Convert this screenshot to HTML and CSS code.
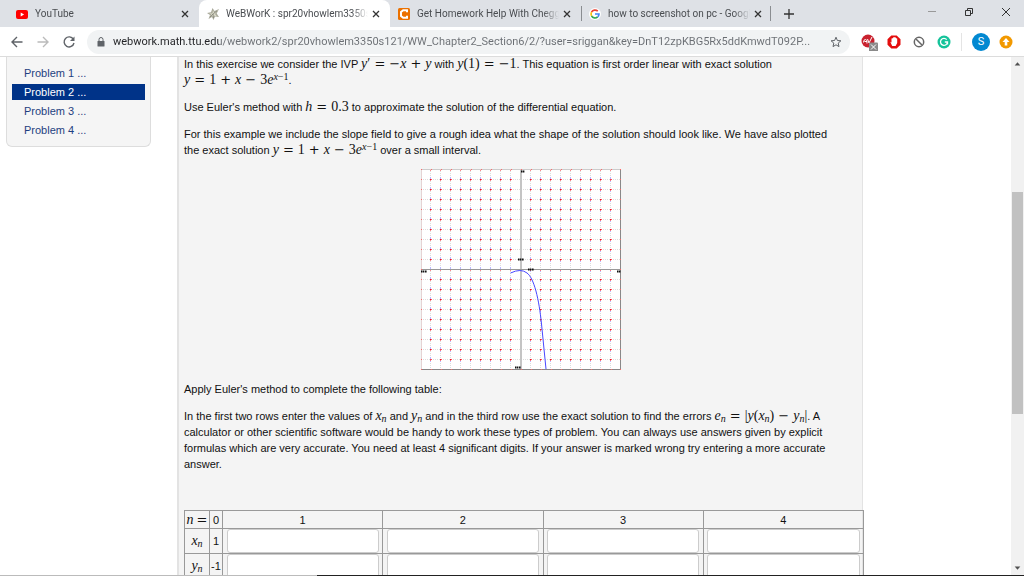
FILE: index.html
```html
<!DOCTYPE html>
<html lang="en">
<head>
<meta charset="utf-8">
<title>WeBWorK : spr20vhowlem3350s121</title>
<link rel="stylesheet" href="styles.css">
</head>
<body>
<header class="tabstrip">
  <nav class="tabs">
    <div class="tab">
      <svg class="fav" viewBox="0 0 12 12"><rect x="0" y="2" width="12" height="9" rx="2" fill="#f00"/><path d="M4.700 4.500v4l3.400-2z" fill="#fff"/></svg>
      <a class="title" href="#">YouTube</a>
      <button class="close" aria-label="Close tab"><svg viewBox="0 0 12 12"><path d="M3 3l6 6M9 3l-6 6"/></svg></button>
    </div>
    <div class="tab active">
      <svg class="fav" viewBox="0 0 12 12"><path d="M0 5l4-.8L5.500 0 7.500 3 12 1 9.700 5.500 12 9 8 8.500 6.500 12 5 9 1.500 11 3 7z" fill="#a9a99a"/><path d="M2 5.200l3.500.3L6 2l1.200 3L11 2 8 6l2 2.500L6.800 7.500 6.500 10 5.200 7.600 2.500 9l2-2.500z" fill="#dcdccb"/><path d="M6 6l4-3M6 6l.5 4M6 6L3 9" stroke="#77776c" stroke-width=".7"/></svg>
      <a class="title" href="#">WeBWorK : spr20vhowlem3350s1</a>
      <button class="close" aria-label="Close tab"><svg viewBox="0 0 12 12"><path d="M3 3l6 6M9 3l-6 6"/></svg></button>
    </div>
    <div class="tab">
      <svg class="fav" viewBox="0 0 12 12"><rect width="12" height="12" rx="1.500" fill="#eb7100"/><path d="M9 4.300V2.200H5.200L3 4v4l2.200 1.800H9V7.700" fill="none" stroke="#fff" stroke-width="2"/></svg>
      <a class="title" href="#">Get Homework Help With Chegg</a>
      <button class="close" aria-label="Close tab"><svg viewBox="0 0 12 12"><path d="M3 3l6 6M9 3l-6 6"/></svg></button>
    </div>
    <div class="tab divided">
      <svg class="fav" viewBox="0 0 12 12"><circle cx="6" cy="6" r="6" fill="#fff"/><g fill="none" stroke-width="1.600"><path d="M8.800 3.200A4 4 0 0 0 2.500 4.200" stroke="#ea4335"/><path d="M2.500 4.200a4 4 0 0 0 0 3.600" stroke="#fbbc05"/><path d="M2.500 7.800a4 4 0 0 0 6.200 1.100" stroke="#34a853"/><path d="M8.700 8.900A4 4 0 0 0 10 6H6" stroke="#4285f4"/></g></svg>
      <a class="title" href="#">how to screenshot on pc - Googl</a>
      <button class="close" aria-label="Close tab"><svg viewBox="0 0 12 12"><path d="M3 3l6 6M9 3l-6 6"/></svg></button>
    </div>
    <button class="newtab" aria-label="New tab"><svg viewBox="0 0 12 12"><path d="M6 1v10M1 6h10"/></svg></button>
  </nav>
  <div class="winctl">
    <button aria-label="Minimize"><svg viewBox="0 0 12 12"><path d="M2 5.500h8" stroke="#999"/></svg></button>
    <button aria-label="Restore"><svg viewBox="0 0 12 12"><path d="M2.500 4.500h5v5h-5zM4.500 4.500v-2h5v5h-2"/></svg></button>
    <button aria-label="Close"><svg viewBox="0 0 12 12"><path d="M2 2l8 8M10 2l-8 8"/></svg></button>
  </div>
</header>

<div class="toolbar">
  <button class="nav" aria-label="Back"><svg viewBox="0 0 14 14"><path d="M12.500 7H2M7 2L2 7l5 5"/></svg></button>
  <button class="nav off" aria-label="Forward"><svg viewBox="0 0 14 14"><path d="M1.500 7H12M7 2l5 5-5 5"/></svg></button>
  <button class="nav" aria-label="Reload"><svg viewBox="0 0 14 14"><path d="M11.400 4.300A5 5 0 1 0 12 8"/><path d="M12.500 1.500v4.500H8z" fill="#5f6368" stroke="none"/></svg></button>
  <div class="omnibox">
    <svg class="lock" viewBox="0 0 10 10"><rect x="1.500" y="4" width="7" height="5.500" rx=".5" fill="#5f6368"/><path d="M3 4V2.500a2 2 0 0 1 4 0V4" fill="none" stroke="#5f6368"/></svg>
    <input class="url" type="text" aria-label="Address" value="webwork.math.ttu.edu/webwork2/spr20vhowlem3350s121/WW_Chapter2_Section6/2/?user=sriggan&amp;key=DnT12zpKBG5Rx5ddKmwdT092P...">
    <button class="star" aria-label="Bookmark"><svg viewBox="0 0 12 12"><path d="M6 1.200l1.400 3.300 3.500.3-2.700 2.300.8 3.500L6 8.800l-3 1.800.8-3.500L1.100 4.800l3.500-.3z"/></svg></button>
  </div>
  <div class="exts">
    <button aria-label="Ad block extension"><svg viewBox="0 0 18 18"><circle cx="8" cy="8" r="6.500" fill="#c9222f"/><path d="M3.500 9.500q0-3 2-3t1.500 4M7 8.500H4.500M7.500 6l1.500 4 3-6" fill="none" stroke="#fff"/><rect x="9" y="9.500" width="9" height="9" rx="1" fill="#8a8a8a"/><path d="M11 11.500l5 5M16 11.500l-5 5" stroke="#fff"/></svg></button>
    <button aria-label="Stop hand extension"><svg viewBox="0 0 18 18"><path d="M6.300 2.500h5.400l3.800 3.800v5.400l-3.800 3.800H6.300l-3.800-3.800V6.300z" fill="#e40d0d"/><path d="M6.500 5.500v4L5.300 8.700 7.200 13h3.400l1.600-3V5.500l-1-.2-.8-1H8.500l-.8 1z" fill="#fff"/></svg></button>
    <button aria-label="Blocked extension"><svg viewBox="0 0 18 18"><circle cx="9" cy="9" r="4.700" fill="none" stroke="#666" stroke-width="1.500"/><path d="M6 6l6 6" stroke="#666" stroke-width="1.500"/></svg></button>
    <button aria-label="Grammar extension"><svg viewBox="0 0 18 18"><circle cx="9" cy="9" r="6.500" fill="#15c39a"/><path d="M11.700 6.600A3.500 3.500 0 1 0 12.500 9H9.800M12.500 9v2.500" fill="none" stroke="#fff" stroke-width="1.300"/></svg></button>
  </div>
  <div class="profile">
    <button class="avatar">S</button>
    <button class="update" aria-label="Update"><svg viewBox="0 0 14 14"><circle cx="7" cy="7" r="6.500" fill="#f29900"/><path d="M7 3L3.500 7H5.700v3.500h2.600V7h2.200z" fill="#fff"/></svg></button>
  </div>
</div>

<div class="view">
  <div class="page">
    <nav class="problems">
      <a href="#">Problem 1 ...</a>
      <a href="#" class="current">Problem 2 ...</a>
      <a href="#">Problem 3 ...</a>
      <a href="#">Problem 4 ...</a>
    </nav>
    <main class="problem">
      <p>In this exercise we consider the IVP <span class="m"><i>y</i>′<b>=</b><b class="neg">−</b><i>x</i><b>+</b><i>y</i></span> with <span class="m"><i>y</i>(1)<b>=</b><b class="neg">−</b>1</span>. This equation is first order linear with exact solution <span class="m"><i>y</i><b>=</b>1<b>+</b><i>x</i><b>−</b>3<i>e</i><sup><i>x</i>−1</sup></span>.</p>
      <p>Use Euler's method with <span class="m"><i>h</i><b>=</b>0.3</span> to approximate the solution of the differential equation.</p>
      <p>For this example we include the slope field to give a rough idea what the shape of the solution should look like. We have also plotted the exact solution <span class="m"><i>y</i><b>=</b>1<b>+</b><i>x</i><b>−</b>3<i>e</i><sup><i>x</i>−1</sup></span> over a small interval.</p>
      <svg class="plot" viewBox="0 0 200 201" role="img" aria-label="Slope field with exact solution">
        <defs>
          <pattern id="grid" width="10" height="10" patternUnits="userSpaceOnUse">
            <path d="M0 .5h10" stroke="#ddd" stroke-dasharray="1 1"/><path d="M9.500 0v10" stroke="#ddd" stroke-dasharray="1 1"/>
          </pattern>
          <pattern id="up" width="10" height="10" patternUnits="userSpaceOnUse">
            <path d="M9.500 8v2" stroke="#b8b8ff"/><path d="M9 .5h1" stroke="#e8102c"/><path d="M0 .5h1" stroke="#f55"/><path d="M9 1.500h1" stroke="#f88"/>
          </pattern>
          <pattern id="down" width="10" height="10" patternUnits="userSpaceOnUse">
            <path d="M9.500 2v1" stroke="#b8b8ff"/><path d="M9 .5h1" stroke="#e8102c"/><path d="M0 .5h1" stroke="#f55"/><path d="M9 1.500h1" stroke="#f77"/>
          </pattern>
        </defs>
        <rect width="200" height="201" fill="#fff"/>
        <rect width="200" height="201" fill="url(#grid)"/>
        <path d="M0 0H200L0 200z" fill="url(#up)"/>
        <path d="M200 0V200H0z" fill="url(#down)"/>
        <path d="M100 0v201" stroke="#c4c4c4" stroke-width="2"/>
        <path d="M0 100.500h200" stroke="#999"/>
        <path d="M0 .5h200" stroke="#ccc"/><path d="M.5 0v201" stroke="#e4d4d4"/><path d="M199.500 0v201M0 200.500h200" stroke="#888"/>
        <path d="M0 .5h200M199.500 0v201M0 200.500h200M.5 0v201" stroke="#f66" stroke-dasharray="1 9"/>
        <path d="M89.500 104Q100 99 106 104C113 109 118 130 120.500 155L125 200" fill="none" stroke="#4747ff"/>
        <g stroke="#111" stroke-width="2" stroke-dasharray="1 .4 2 .6"><path d="M100 2.500h4M0 102.500h6M196 102.500h4M94 198.500h6M97 90.500h6M107 100.500h6"/></g>
      </svg>
      <p>Apply Euler's method to complete the following table:</p>
      <p>In the first two rows enter the values of <span class="m"><i>x<sub>n</sub></i></span> and <span class="m"><i>y<sub>n</sub></i></span> and in the third row use the exact solution to find the errors <span class="m"><i>e<sub>n</sub></i><b>=</b>|<i>y</i>(<i>x<sub>n</sub></i>)<b>−</b><i>y<sub>n</sub></i>|</span>. A calculator or other scientific software would be handy to work these types of problem. You can always use answers given by explicit formulas which are very accurate. You need at least 4 significant digits. If your answer is marked wrong try entering a more accurate answer.</p>
      <table class="answers">
        <colgroup><col class="c-label"><col class="c-zero"><col><col><col><col></colgroup>
        <tr class="head"><th><span class="m tight"><i>n</i><b>=</b></span></th><th>0</th><th>1</th><th>2</th><th>3</th><th>4</th></tr>
        <tr><th><span class="m"><i>x<sub>n</sub></i></span></th><td>1</td><td><input type="text" aria-label="x 1"></td><td><input type="text" aria-label="x 2"></td><td><input type="text" aria-label="x 3"></td><td><input type="text" aria-label="x 4"></td></tr>
        <tr><th><span class="m"><i>y<sub>n</sub></i></span></th><td>-1</td><td><input type="text" aria-label="y 1"></td><td><input type="text" aria-label="y 2"></td><td><input type="text" aria-label="y 3"></td><td><input type="text" aria-label="y 4"></td></tr>
      </table>
    </main>
  </div>
  <div class="scrollbar">
    <svg viewBox="0 0 14 14"><path d="M7 5l3 3.500H4z" fill="#505050"/></svg>
    <div class="track"><div class="thumb"></div></div>
    <svg viewBox="0 0 14 14"><path d="M7 9l3-3.500H4z" fill="#505050"/></svg>
  </div>
</div>
<div class="taskbar-edge"></div>
</body>
</html>
```

FILE: styles.css
```css
* { box-sizing: border-box; }
body {
  margin: 0;
  height: 100vh;
  display: flex;
  flex-direction: column;
  overflow: hidden;
  background: #fff;
  font-family: "Liberation Sans", Arial, sans-serif;
  font-size: 11px;
  line-height: 16px;
  color: #111;
}
button { border: 0; padding: 0; background: none; font: inherit; display: flex; align-items: center; justify-content: center; }
svg { display: block; }
a { text-decoration: none; color: inherit; }

.tabstrip { display: flex; flex: none; height: 27px; background: #dee1e6; padding-left: 8px; font: 10px/26px Roboto, "Open Sans", sans-serif; }
.tabs { display: flex; flex: 1; min-width: 0; }
.tab { display: flex; align-items: center; width: 191px; padding: 0 7px 0 8px; color: #4a4d51; border-right: 1px solid transparent; }
.tab.active { background: #fff; border-radius: 8px 8px 0 0; }
.tab.divided { background: linear-gradient(#8a8d91, #8a8d91) left center / 1px 15px no-repeat, linear-gradient(#8a8d91, #8a8d91) right center / 1px 15px no-repeat; }
.fav { width: 12px; height: 12px; flex: none; margin-right: 7px; }
.title { flex: 1; overflow: hidden; white-space: nowrap; margin-right: 2px; -webkit-mask-image: linear-gradient(90deg, #000 calc(100% - 16px), transparent); mask-image: linear-gradient(90deg, #000 calc(100% - 16px), transparent); }
.close, .close svg { width: 12px; height: 12px; }
.close path, .newtab path { stroke: #333; stroke-width: 1.3; }
.newtab { width: 34px; }
.newtab svg { width: 12px; height: 12px; }
.winctl { display: flex; align-items: center; height: 24px; }
.winctl button { width: 37px; }
.winctl svg { width: 12px; height: 12px; fill: none; stroke: #333; }

.toolbar { display: flex; flex: none; align-items: center; height: 30px; padding: 0 11px 0 4px; border-bottom: 1px solid #dcdcdc; background: #fff; }
.nav { width: 26px; }
.nav svg { width: 14px; height: 14px; fill: none; stroke: #5f6368; stroke-width: 1.4; }
.nav.off svg { stroke: #bbb; }
.omnibox { display: flex; align-items: center; flex: 1; min-width: 0; height: 24px; margin-left: 5px; padding: 0 8px 0 9px; border-radius: 12px; background: #f1f3f4; }
.lock { width: 10px; height: 10px; flex: none; margin-right: 7px; }
.url { flex: 1; min-width: 0; border: 0; padding: 0; height: 20px; font: 11px Roboto, "Open Sans", sans-serif; background: linear-gradient(90deg, #202124 106px, #6a6e73 106px); -webkit-background-clip: text; background-clip: text; color: transparent; }
.star svg { width: 12px; height: 12px; fill: none; stroke: #5f6368; }
.exts { display: flex; gap: 7px; padding: 0 8px 0 10px; border-right: 1px solid #e4e4e4; }
.exts svg { width: 18px; height: 18px; }
.profile { display: flex; align-items: center; gap: 9px; padding-left: 10px; }
.avatar { width: 18px; height: 18px; border-radius: 50%; background: #0288d1; color: #fff; font: 11px/18px Roboto, sans-serif; }
.update svg { width: 14px; height: 14px; }

.view { display: flex; flex: 1; min-height: 0; overflow: hidden; }
.page { display: flex; flex: 1; min-width: 0; align-items: flex-start; padding: 0 148px 0 6px; }
.problems { display: flex; flex-direction: column; gap: 3px; width: 145px; margin-right: 26px; padding: 8px 5px 8px; border: 1px solid #ddd; border-top: 0; border-radius: 0 0 6px 6px; background: #f5f5f5; }
.problems a { height: 16px; padding-left: 12px; color: #1f3f80; }
.problems .current { background: #003388; color: #fff; }
.problem { flex: 1; min-width: 0; margin-top: -1px; padding: 0 5px; border: solid #e3e3e3; border-width: 0 1px 0 2px; background: #f4f4f4; }
.problem p { margin: 0 12px 11px 0; }

.m { font: 14px/1 "Liberation Serif", "Times New Roman", serif; line-height: 0; white-space: nowrap; }
.m b { font: 13px "DejaVu Sans", sans-serif; line-height: 0; margin: 0 4px; }
.m b.neg { margin: 0; }
.m.tight b { margin: 0 0 0 3px; }
.m sup, .m sub { font-size: 10px; line-height: 0; }
.m sup { vertical-align: 4px; }
.m sub { vertical-align: -2px; }

.plot { width: 200px; height: 201px; margin: 0 auto 11px; }

.answers { width: calc(100% + 7px); margin: 38px 0 0; border-collapse: collapse; table-layout: fixed; border: 1px solid #777; }
.answers th, .answers td { height: 25px; padding: 0; border: 1px solid #999; font-weight: normal; text-align: center; }
.answers .head th { height: 18px; }
.answers col.c-label { width: 25px; }
.answers col.c-zero { width: 13px; }
.answers input { display: block; width: calc(100% - 7px); height: 24px; margin: 0 auto; border: 1px solid #ccc; border-radius: 3px; background: #fff; }

.scrollbar { display: flex; flex-direction: column; width: 13px; background: #f1f1f1; }
.scrollbar svg { width: 13px; height: 14px; flex: none; }
.track { flex: 1; padding: 0 1px; display: flex; flex-direction: column; }
.track::before { content: ""; flex: 121; }
.thumb { flex: 222; background: #c1c1c1; }
.track::after { content: ""; flex: 147; }
.taskbar-edge { flex: none; height: 1px; background: linear-gradient(90deg, #bbb 31%, #222 31%); }
```
